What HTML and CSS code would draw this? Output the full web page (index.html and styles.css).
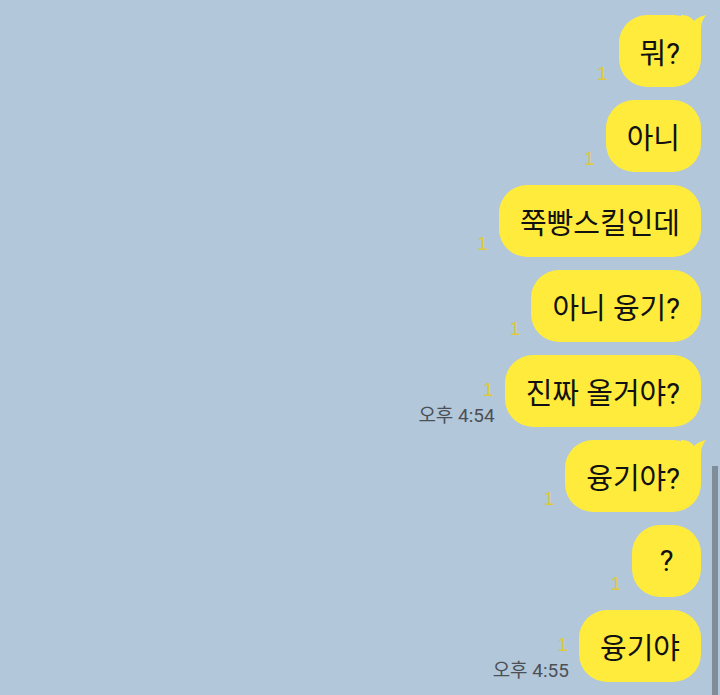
FILE: index.html
```html
<!DOCTYPE html>
<html lang="ko">
<head>
    <meta charset="UTF-8">
    <meta name="viewport" content="width=device-width, initial-scale=1.0">
    <title>채팅</title>
    <link rel="stylesheet" href="styles.css">
</head>
<body>
    <div class="chat">
        <div class="row">
            <div class="meta"><span class="unread">1</span></div>
            <div class="bubble">뭐?
                <svg class="tail" width="25" height="30" viewBox="0 0 25 30"><path d="M0 0 C6 0 10 2 13 6 C16 3 20 1 25 0 C22 4 20 8 20 14 V30 H0 Z"/></svg>
            </div>
        </div>
        <div class="row">
            <div class="meta"><span class="unread">1</span></div>
            <div class="bubble">아니</div>
        </div>
        <div class="row">
            <div class="meta"><span class="unread">1</span></div>
            <div class="bubble">쭉빵스킬인데</div>
        </div>
        <div class="row">
            <div class="meta"><span class="unread">1</span></div>
            <div class="bubble">아니 융기?</div>
        </div>
        <div class="row">
            <div class="meta"><span class="unread">1</span><span class="time">오후 4:54</span></div>
            <div class="bubble">진짜 올거야?</div>
        </div>
        <div class="row">
            <div class="meta"><span class="unread">1</span></div>
            <div class="bubble">융기야?
                <svg class="tail" width="25" height="30" viewBox="0 0 25 30"><path d="M0 0 C6 0 10 2 13 6 C16 3 20 1 25 0 C22 4 20 8 20 14 V30 H0 Z"/></svg>
            </div>
        </div>
        <div class="row">
            <div class="meta"><span class="unread">1</span></div>
            <div class="bubble short">?</div>
        </div>
        <div class="row">
            <div class="meta"><span class="unread">1</span><span class="time">오후 4:55</span></div>
            <div class="bubble">융기야</div>
        </div>
    </div>
    <div class="scrollbar"></div>
</body>
</html>
```

FILE: styles.css
```css
body {
    margin: 0;
    background-color: #b2c7da;
    font-family: Roboto, "Noto Sans CJK KR", sans-serif;
    height: 695px;
    overflow: hidden;
}
.chat {
    display: flex;
    flex-direction: column;
    gap: 13px;
    padding: 15px 19px 0 0;
}
.row {
    display: flex;
    justify-content: flex-end;
    align-items: flex-end;
}
.meta {
    display: flex;
    flex-direction: column;
    align-items: flex-end;
    margin-right: 10px;
    line-height: 1.2;
}
.unread {
    font-family: "Liberation Sans", sans-serif;
    font-size: 19px;
    color: #ddca3c;
    line-height: 20px;
    padding-bottom: 3px;
    padding-right: 1px;
}
.time {
    font-size: 19px;
    color: #4c5054;
    margin-top: 2px;
    margin-bottom: -1px;
}
.bubble {
    position: relative;
    display: flex;
    align-items: center;
    justify-content: center;
    height: 72px;
    box-sizing: border-box;
    padding: 0 21px;
    border-radius: 28px;
    background-color: #ffeb3b;
    color: #111;
    font-size: 29px;
    white-space: nowrap;
}
.bubble.short {
    min-width: 69px;
}
.tail {
    position: absolute;
    top: 0;
    right: -5px;
    fill: #ffeb3b;
}
.scrollbar {
    position: fixed;
    right: 2px;
    top: 466px;
    width: 6px;
    height: 229px;
    background-color: #7f8c99;
}
```
